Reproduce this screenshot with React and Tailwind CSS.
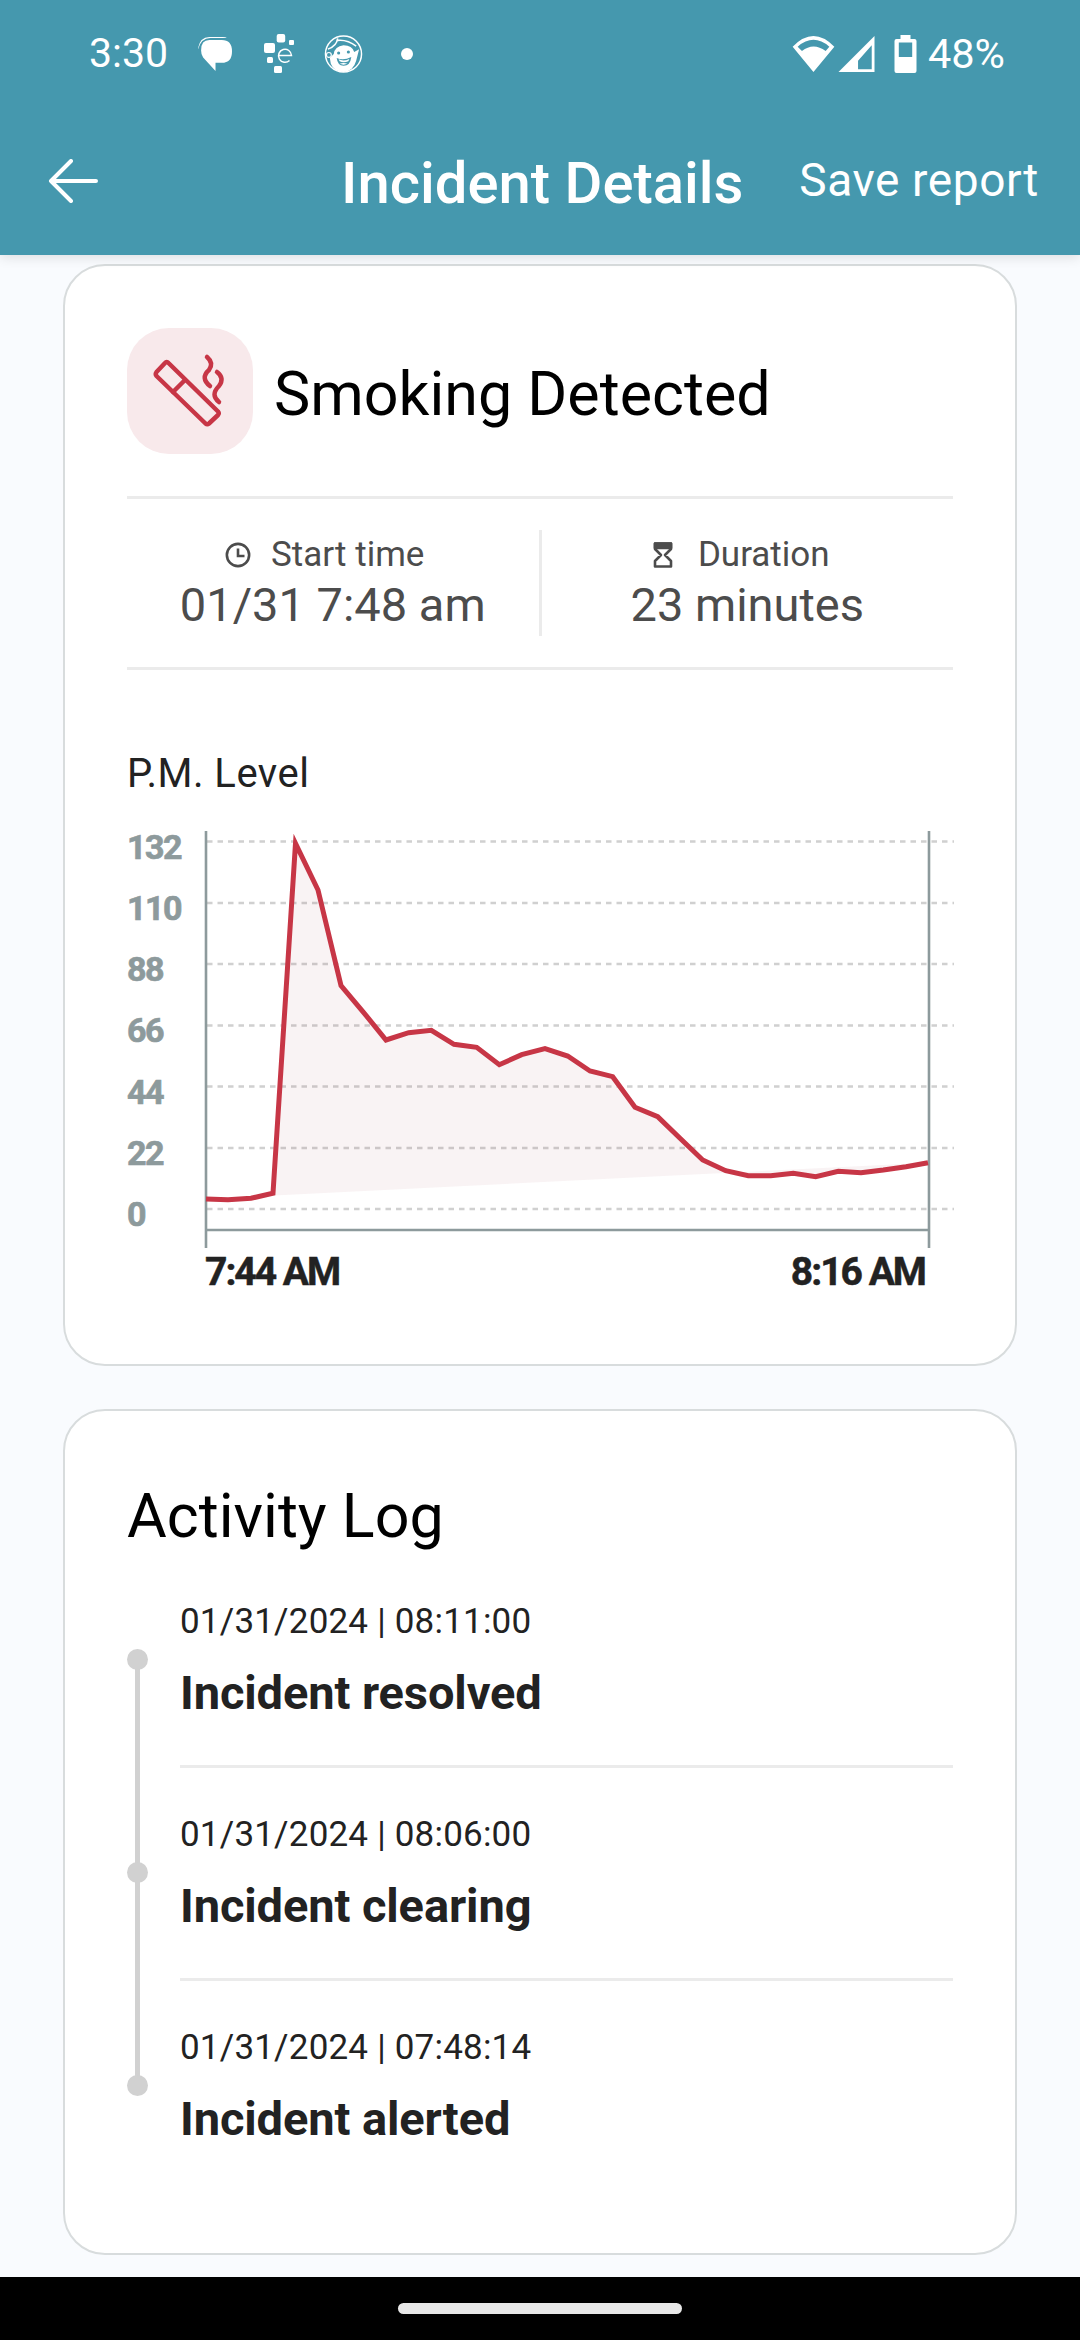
const GRID_Y = [841.5, 903, 964, 1025.5, 1086.5, 1148, 1209];
const Y_LABELS = ['132', '110', '88', '66', '44', '22', '0'];
const POINTS = [
  [206, 1199], [228, 1199.7], [251, 1198.3], [273, 1193.3], [295.5, 843.5], [318, 890], [341, 985.7],
  [363.5, 1012.3], [386, 1040], [408.7, 1032.7], [431.3, 1030.3], [454, 1044.3], [476.7, 1047.3],
  [499.3, 1064.7], [521.7, 1054.7], [545, 1048.7], [567.7, 1056], [590, 1071], [612.7, 1076.7],
  [635, 1107.3], [657.7, 1116.7], [680, 1138.3], [702.7, 1160], [725.7, 1170.7], [748.3, 1175.7],
  [770.7, 1175.7], [793.3, 1173.3], [815.7, 1176.7], [838.3, 1171.3], [861, 1172.7], [883.3, 1170],
  [906, 1166.7], [928, 1162.7],
];

const LOG = [
  ['01/31/2024 | 08:11:00', 'Incident resolved'],
  ['01/31/2024 | 08:06:00', 'Incident clearing'],
  ['01/31/2024 | 07:48:14', 'Incident alerted'],
];

function StatusBar() {
  return (
    <div className="flex h-[107px] items-center pl-[89px] pr-[75px] text-white">
      <span className="w-[79px] text-[41px] leading-none">3:30</span>
      <svg className="ml-[30px]" width="34" height="34" viewBox="0 0 33 33" fill="white">
        <path d="M0 11 Q2 0 11 0 H24 Q27 0 28 1 H12 Q3 1 0 12 Z" />
        <path d="M11 3 H23 Q33 3 33 14 Q33 25 23 25 H17 V33 L5 20 Q3 17 3 13 Q3 3 11 3 Z" />
      </svg>
      <svg className="ml-[32px]" width="30" height="40" viewBox="0 0 30 40" fill="white">
        <rect x="12.7" y="0" width="8.5" height="8.5" rx="2" />
        <rect x="25" y="6" width="5" height="5" rx="1" />
        <rect x="0" y="9" width="11" height="10" rx="2" />
        <rect x="3" y="23" width="6" height="6" rx="1.5" />
        <rect x="10" y="32" width="8" height="7" rx="1.5" />
        <path d="M14.5 21.5 H27.5 A6.5 6.5 0 1 0 25.5 26.5" fill="none" stroke="white" strokeWidth="1.5" />
      </svg>
      <svg className="ml-[30px]" width="39" height="40" viewBox="0 0 40 40">
        <circle cx="20" cy="20" r="18.5" fill="none" stroke="white" strokeWidth="1.5" />
        <path d="M6 24 L10 20 Q11 12 20 11 Q29 11 31 18 L36 15 L33 27 Q30 38 20 38.5 Q10 38 7 30 Z" fill="white" />
        <path d="M4 15 Q13 12 14 4 M14 6 Q24 5 33 12" fill="none" stroke="white" strokeWidth="1.6" />
        <circle cx="5" cy="21" r="2.5" fill="none" stroke="white" strokeWidth="1.2" />
        <path d="M13 24 Q20 27 28 23 Q27 32 20 32 Q14 32 13 24 Z" fill="#4598ae" />
        <path d="M15 25.5 Q20 28 26 25 L25 27.5 Q20 29.5 16 27.5 Z M16 30 Q20 28.5 24 30 L20 31 Z" fill="white" />
        <circle cx="15" cy="19" r="1.6" fill="#4598ae" />
        <circle cx="25" cy="18" r="1.6" fill="#4598ae" />
      </svg>
      <div className="ml-[38px] h-[12px] w-[12px] rounded-full bg-white" />
      <div className="ml-auto flex items-center">
        <svg width="43" height="36" viewBox="0 0 41.7 36" fill="white">
          <path fillRule="evenodd" d="M0 10.7 Q20.8 -10.7 41.7 10.7 L20.8 36 Z M5 10.7 Q20.8 -3 36.7 10.7 L33 15 Q20.8 6 9.3 15 Z" />
        </svg>
        <svg className="ml-[3px]" width="37" height="36" viewBox="0 0 35 35" fill="white">
          <path fillRule="evenodd" d="M35 0 V35 H0 Z M19 24 L32.3 9 V32.3 H19 Z" />
        </svg>
        <svg className="ml-[19px]" width="23" height="38" viewBox="0 0 22 38" fill="white">
          <path fillRule="evenodd" d="M6 0 H16 V4 H20 Q22 4 22 6 V36 Q22 38 20 38 H2 Q0 38 0 36 V6 Q0 4 2 4 H6 Z M4.3 7.5 V22 H17.7 V7.5 Z" />
        </svg>
        <span className="ml-[11px] text-[41.5px] leading-none">48%</span>
      </div>
    </div>
  );
}

function AppBar() {
  return (
    <div className="relative flex h-[148px] items-start">
      <svg className="ml-[48px] mt-[52px]" width="54" height="44" viewBox="0 0 54 44" fill="none" stroke="white" strokeWidth="4" strokeLinecap="round" strokeLinejoin="round">
        <path d="M3 22 H48 M23 2 L3 22 L23 42" />
      </svg>
      <span className="ml-[239px] mt-[46px] text-[58px] font-medium leading-[60px]">Incident Details</span>
      <span className="absolute right-[41px] top-[43px] text-[46px] leading-[60px] tracking-[0.6px]">Save report</span>
    </div>
  );
}

function SmokingIcon() {
  return (
    <svg width="126" height="126" viewBox="0 0 126 126" fill="none" stroke="#c73646" strokeWidth="4.5" strokeLinecap="round" strokeLinejoin="round">
      <path d="M29.5 44 L38 35 Q39.7 33 41.5 35 L91 83.5 Q92.5 85.3 91 87 L82 95.5 Q80.3 97 78.5 95.5 L29.5 48 Q28 46 29.5 44 Z" />
      <path d="M46 64 L58 52" />
      <path d="M80 29 Q87 35 82 42 Q73 50 83 58" />
      <path d="M90 44 Q98 50 92 58 Q83 67 92 74" />
    </svg>
  );
}

function Chart() {
  const line = POINTS.map((p) => p.join(',')).join(' ');
  return (
    <div className="relative mt-[33px] h-[460px]">
      <svg className="absolute -left-[127px] -top-[831px]" width="1080" height="1290">
        {GRID_Y.map((y) => (
          <line key={y} x1="207" x2="954" y1={y} y2={y} stroke="#d0d0d0" strokeWidth="2.4" strokeDasharray="5.5 5" />
        ))}
        <polygon points={line} fill="#9b3748" fillOpacity="0.06" />
        <line x1="206" x2="206" y1="831" y2="1248" stroke="#8d9a9c" strokeWidth="2.6" />
        <line x1="929" x2="929" y1="831" y2="1248" stroke="#8d9a9c" strokeWidth="2.6" />
        <line x1="206" x2="929" y1="1230" y2="1230" stroke="#8d9a9c" strokeWidth="2.6" />
        <polyline points={line} fill="none" stroke="#c73646" strokeWidth="5" strokeLinejoin="miter" />
      </svg>
      <div className="absolute left-0 top-[-4px] flex h-[407px] flex-col justify-between text-[34px] font-bold leading-[40px] tracking-[-1.5px] text-[#8d9a9c] [-webkit-text-stroke:0.7px_#8d9a9c]">
        {Y_LABELS.map((v) => <span key={v}>{v}</span>)}
      </div>
      <div className="absolute left-[78px] top-[421px] text-[39px] font-bold leading-[40px] tracking-[-2px] text-[#222] [-webkit-text-stroke:0.5px_#222]">7:44 AM</div>
      <div className="absolute right-[28px] top-[421px] text-[39px] font-bold leading-[40px] tracking-[-2px] text-[#222] [-webkit-text-stroke:0.5px_#222]">8:16 AM</div>
    </div>
  );
}

function LogRow({ time, title, last }) {
  return (
    <div className="relative ml-[53px]">
      <div className="absolute left-[-53px] top-[47px] h-[21px] w-[21px] rounded-full bg-[#d1d1d1]" />
      <div className="text-[35px] leading-[40px] tracking-[0.2px] text-[#222]">{time}</div>
      <div className="mt-[23px] text-[47px] font-bold leading-[56px] tracking-[-0.1px] text-[#222]">{title}</div>
      {!last && <div className="mb-[47px] mt-[44px] h-[3px] bg-[#ebebeb]" />}
    </div>
  );
}

export default function App() {
  return (
    <div className="flex h-[2340px] w-[1080px] flex-col overflow-hidden bg-[#f9fbfe] font-['Roboto',sans-serif]">
      <header className="relative z-10 bg-[#4598ae] text-white shadow-[0_2px_12px_rgba(0,0,0,0.12)]">
        <StatusBar />
        <AppBar />
      </header>
      <main className="flex-1 px-[63px] pt-[9px]">
        <section className="h-[1102px] rounded-[42px] border-2 border-[#d8dcdd] bg-white px-[62px] pt-[62px]">
          <div className="flex items-center">
            <div className="h-[126px] w-[126px] rounded-[42px] bg-[#f8e9eb]">
              <SmokingIcon />
            </div>
            <h2 className="ml-[21px] pt-[5px] text-[61px] leading-[70px] text-black">Smoking Detected</h2>
          </div>
          <div className="mt-[42px] flex h-[174px] items-center border-y-[3px] border-[#ebebeb]">
            <div className="flex-1 pt-[3px] text-center text-[#4c4c4c]">
              <div className="flex items-center justify-center pr-[16px] text-[35px] leading-[40px]">
                <svg width="26" height="26" viewBox="0 0 28 28" fill="none" stroke="#4c4c4c" strokeWidth="2.8">
                  <circle cx="14" cy="14" r="12" />
                  <path d="M14 7 V15 H21" />
                </svg>
                <span className="ml-[20px]">Start time</span>
              </div>
              <div className="text-[47px] leading-[60px]">01/31 7:48 am</div>
            </div>
            <div className="h-[106px] w-[3px] bg-[#ebebeb]" />
            <div className="flex-1 pt-[3px] text-center text-[#4c4c4c]">
              <div className="flex items-center justify-center pr-[12px] text-[35px] leading-[40px]">
                <svg width="20" height="26" viewBox="0 0 20 26" stroke="#4c4c4c" strokeWidth="2.6" strokeLinejoin="round">
                  <path d="M2 1.5 H18 V7 L12 13 L18 19 V24.5 H2 V19 L8 13 L2 7 Z" fill="none" />
                  <path d="M2 1.5 H18 V6 H2 Z" fill="#4c4c4c" />
                </svg>
                <span className="ml-[25px]">Duration</span>
              </div>
              <div className="text-[47px] leading-[60px]">23 minutes</div>
            </div>
          </div>
          <div className="mt-[80px] text-[40px] leading-[48px] tracking-[0.5px] text-[#222]">P.M. Level</div>
          <Chart />
        </section>
        <section className="mt-[43px] h-[846px] rounded-[42px] border-2 border-[#d8dcdd] bg-white px-[62px] pt-[70px]">
          <h2 className="text-[61px] leading-[70px] text-black">Activity Log</h2>
          <div className="relative mt-[51px]">
            <div className="absolute left-[8px] top-[58px] h-[426px] w-[5px] bg-[#d1d1d1]" />
            {LOG.map(([time, title], i) => (
              <LogRow key={time} time={time} title={title} last={i === LOG.length - 1} />
            ))}
          </div>
        </section>
      </main>
      <div className="flex h-[63px] items-start justify-center bg-black pt-[26px]">
        <div className="h-[11px] w-[284px] rounded-full bg-[#e8e8e8]" />
      </div>
    </div>
  );
}
